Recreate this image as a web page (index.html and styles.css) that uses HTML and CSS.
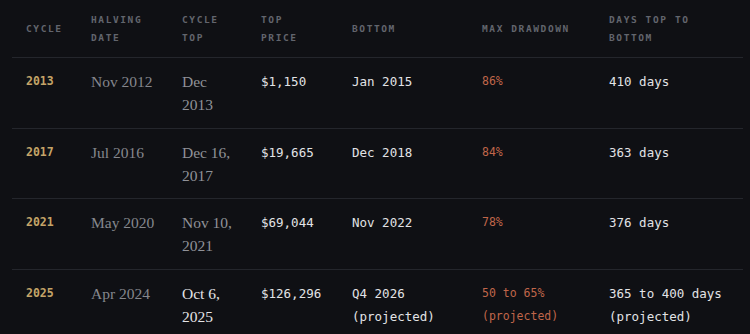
FILE: index.html
```html
<!DOCTYPE html>
<html lang="en">
<head>
<meta charset="utf-8">
<title>Bitcoin cycles</title>
<link rel="stylesheet" href="styles.css">
</head>
<body>
<div class="wrap">
<table class="cycles">
  <colgroup>
    <col class="c1"><col class="c2"><col class="c3"><col class="c4"><col class="c5"><col class="c6"><col class="c7">
  </colgroup>
  <thead>
    <tr>
      <th>Cycle</th>
      <th>Halving<br>date</th>
      <th>Cycle<br>top</th>
      <th>Top<br>price</th>
      <th>Bottom</th>
      <th>Max drawdown</th>
      <th>Days top to<br>bottom</th>
    </tr>
  </thead>
  <tbody>
    <tr>
      <td class="year">2013</td>
      <td class="serif dim">Nov 2012</td>
      <td class="serif mid">Dec<br>2013</td>
      <td class="mono">$1,150</td>
      <td class="mono">Jan 2015</td>
      <td class="dd">86%</td>
      <td class="mono">410 days</td>
    </tr>
    <tr>
      <td class="year">2017</td>
      <td class="serif dim">Jul 2016</td>
      <td class="serif mid">Dec 16,<br>2017</td>
      <td class="mono">$19,665</td>
      <td class="mono">Dec 2018</td>
      <td class="dd">84%</td>
      <td class="mono">363 days</td>
    </tr>
    <tr>
      <td class="year">2021</td>
      <td class="serif dim">May 2020</td>
      <td class="serif mid">Nov 10,<br>2021</td>
      <td class="mono">$69,044</td>
      <td class="mono">Nov 2022</td>
      <td class="dd">78%</td>
      <td class="mono">376 days</td>
    </tr>
    <tr>
      <td class="year">2025</td>
      <td class="serif dim">Apr 2024</td>
      <td class="serif bright">Oct 6,<br>2025</td>
      <td class="mono">$126,296</td>
      <td class="mono">Q4 2026<br>(projected)</td>
      <td class="dd">50 to 65%<br>(projected)</td>
      <td class="mono">365 to 400 days<br>(projected)</td>
    </tr>
  </tbody>
</table>
</div>
</body>
</html>
```

FILE: styles.css
```css
html, body {
  margin: 0;
  padding: 0;
  background: #0f1014;
}
.wrap {
  padding: 0 7px 0 12px;
}
.cycles {
  width: 731px;
  table-layout: fixed;
  border-collapse: collapse;
  font-family: "DejaVu Sans Mono", "Liberation Mono", monospace;
}
.c1 { width: 79px; }
.c2 { width: 91px; }
.c3 { width: 79px; }
.c4 { width: 91px; }
.c5 { width: 130px; }
.c6 { width: 127px; }
.c7 { width: 134px; }

.cycles th {
  text-align: left;
  vertical-align: middle;
  font-size: 9.5px;
  font-weight: bold;
  line-height: 18px;
  letter-spacing: 1.6px;
  text-transform: uppercase;
  color: #62656d;
  padding: 11px 0 10px 0;
  border-bottom: 1px solid #24262c;
}
.cycles td {
  vertical-align: top;
  text-align: left;
  line-height: 23px;
  padding: 12px 0 11.5px 0;
  border-bottom: 1px solid #24262c;
}
.cycles tbody tr:last-child td {
  border-bottom: none;
}
.cycles th:first-child,
.cycles td:first-child {
  padding-left: 14px;
}
.year {
  font-size: 11.5px;
  font-weight: bold;
  color: #c4a468;
}
.serif {
  font-family: "Liberation Serif", "Times New Roman", serif;
  font-size: 15.5px;
}
.dim { color: #85878d; }
.mid { color: #909298; }
.bright { color: #e4e4e6; }
.mono {
  font-size: 12.5px;
  color: #e2e3e6;
}
.dd {
  font-size: 11.5px;
  color: #c0664a;
}
```
